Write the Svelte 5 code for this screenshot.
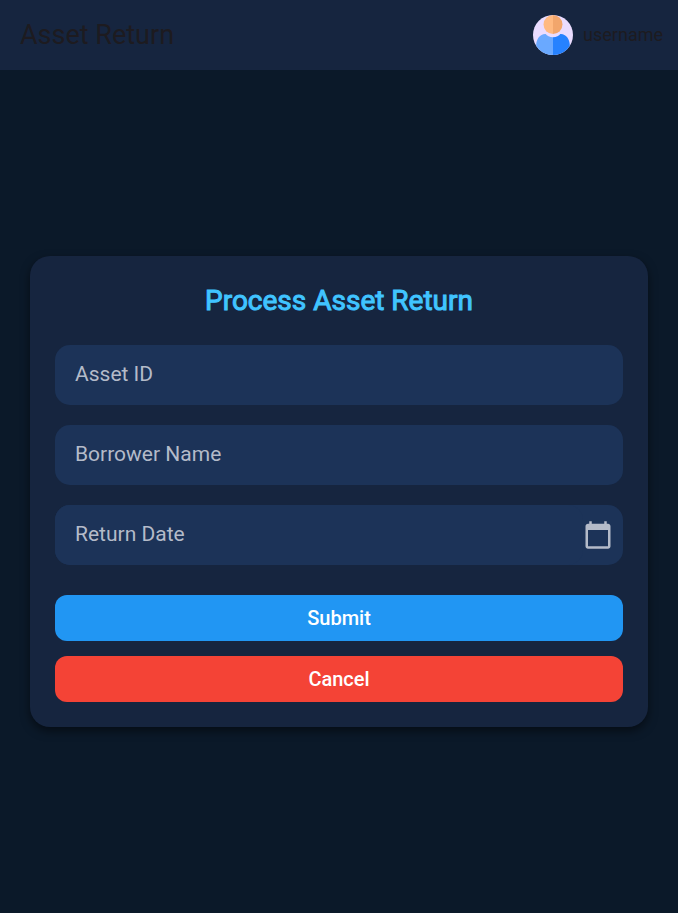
<script>
  let assetId = $state('');
  let borrower = $state('');
  let returnDate = $state('');
  let dateInput;

  function reset() {
    assetId = '';
    borrower = '';
    returnDate = '';
  }

  function pickToday() {
    returnDate = new Date().toISOString().slice(0, 10);
    dateInput.focus();
  }
</script>

<div class="page">
  <header>
    <h1>Asset Return</h1>
    <div class="user">
      <svg class="avatar" viewBox="0 0 40 40" aria-hidden="true">
        <defs>
          <clipPath id="disc"><circle cx="20" cy="20" r="20" /></clipPath>
        </defs>
        <g clip-path="url(#disc)">
          <rect width="40" height="40" fill="#eadcff" />
          <path d="M20 0a9.500 9.500 0 0 0 0 19z" fill="#ffb980" />
          <path d="M20 0a9.500 9.500 0 0 1 0 19z" fill="#f2a66c" />
          <path d="M20 22.200C16.500 22.200 14 21 12.700 19C7.500 18.500 3.200 24 3.200 30V40H20z" fill="#6aa9ff" />
          <path d="M20 22.200C23.500 22.200 26 21 27.300 19C32.500 18.500 36.800 24 36.800 30V40H20z" fill="#2682ff" />
        </g>
      </svg>
      <span>username</span>
    </div>
  </header>

  <main>
    <form class="card" onsubmit={(e) => e.preventDefault()}>
      <h2>Process Asset Return</h2>
      <div class="fields">
        <input type="text" placeholder="Asset ID" aria-label="Asset ID" bind:value={assetId} />
        <input type="text" placeholder="Borrower Name" aria-label="Borrower Name" bind:value={borrower} />
        <div class="date">
          <input
            type="text"
            placeholder="Return Date"
            aria-label="Return Date"
            bind:value={returnDate}
            bind:this={dateInput}
          />
          <button type="button" class="calendar" aria-label="Choose date" onclick={pickToday}>
            <svg viewBox="0 0 24 24" aria-hidden="true">
              <path
                d="M20 3h-1V1h-2v2H7V1H5v2H4c-1.100 0-2 .9-2 2v16c0 1.100.9 2 2 2h16c1.100 0 2-.9 2-2V5c0-1.100-.9-2-2-2zm0 18H4V8h16v13z"
                fill="currentColor"
              />
            </svg>
          </button>
        </div>
      </div>
      <div class="actions">
        <button type="submit" class="action submit">Submit</button>
        <button type="button" class="action cancel" onclick={reset}>Cancel</button>
      </div>
    </form>
  </main>
</div>

<style>
  :global(body) {
    margin: 0;
    background: #0b1929;
  }

  .page {
    display: flex;
    flex-direction: column;
    min-height: 100vh;
    background: #0b1929;
    font-family: Roboto, sans-serif;
  }

  header {
    display: flex;
    align-items: center;
    justify-content: space-between;
    box-sizing: border-box;
    height: 70px;
    padding: 0 15px 0 20px;
    background: #16253f;
    color: #1d1b20;
  }

  h1 {
    margin: 0;
    font-size: 27px;
    font-weight: 400;
    line-height: 36px;
  }

  .user {
    display: flex;
    align-items: center;
    gap: 10px;
    font-size: 18px;
    line-height: 24px;
  }

  .avatar {
    display: block;
    width: 40px;
    height: 40px;
  }

  main {
    display: flex;
    flex: 1;
    align-items: center;
    padding: 30px;
  }

  .card {
    flex: 1;
    min-width: 0;
    padding: 25px;
    border-radius: 20px;
    background: #16253f;
    box-shadow: 0 4px 10px rgba(0, 0, 0, 0.5);
  }

  h2 {
    margin: 0 0 24px;
    color: #40c4ff;
    font-size: 28px;
    font-weight: 400;
    line-height: 40px;
    text-align: center;
    -webkit-text-stroke: 1px currentColor;
  }

  .fields {
    display: flex;
    flex-direction: column;
    gap: 20px;
  }

  input {
    box-sizing: border-box;
    width: 100%;
    height: 60px;
    padding: 0 20px 2px;
    border: 0;
    border-radius: 15px;
    background: #1c3358;
    color: #fff;
    font: 400 21px/24px Roboto, sans-serif;
    outline: none;
  }

  input::placeholder {
    color: #b4bbc9;
    opacity: 1;
  }

  .date {
    display: flex;
    align-items: center;
    border-radius: 15px;
    background: #1c3358;
  }

  .date input {
    flex: 1;
    min-width: 0;
  }

  .calendar {
    display: flex;
    padding: 0;
    margin-right: 10px;
    border: 0;
    background: none;
    color: #b4bbc9;
    cursor: pointer;
  }

  .calendar svg {
    width: 30px;
    height: 30px;
  }

  .actions {
    display: flex;
    flex-direction: column;
    gap: 15px;
    margin-top: 30px;
  }

  .action {
    height: 46px;
    padding: 0;
    border: 0;
    border-radius: 12px;
    color: #fff;
    font: 500 20px/24px Roboto, sans-serif;
    cursor: pointer;
  }

  .submit {
    background: #2196f3;
  }

  .cancel {
    background: #f44336;
  }
</style>
